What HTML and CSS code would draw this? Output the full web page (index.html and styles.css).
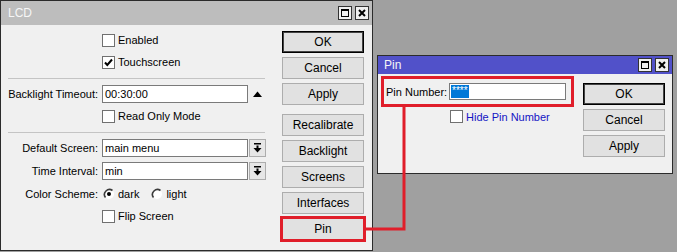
FILE: index.html
```html
<!DOCTYPE html>
<html>
<head>
<meta charset="utf-8">
<link rel="stylesheet" href="styles.css">
</head>
<body>
<div class="desktop">
  <div class="win lcd">
    <div class="titlebar">
      <span class="title">LCD</span>
      <span class="tbtns">
        <svg class="tbtn" width="14" height="14" viewBox="0 0 14 14"><rect x="0.5" y="0.5" width="13" height="13" fill="#f0f0f0" stroke="#333"/><rect x="3.5" y="3.5" width="7" height="7" fill="none" stroke="#000"/><rect x="3" y="3" width="8" height="2" fill="#000"/></svg>
        <svg class="tbtn" width="14" height="14" viewBox="0 0 14 14"><rect x="0.5" y="0.5" width="13" height="13" fill="#f0f0f0" stroke="#333"/><path d="M4 4L10 10M10 4L4 10" stroke="#000" stroke-width="2"/></svg>
      </span>
    </div>
    <div class="body">
      <div class="form">
        <div class="row indent">
          <span class="check"></span><span class="ctext">Enabled</span>
        </div>
        <div class="row indent">
          <span class="check"><svg width="11" height="11" viewBox="0 0 11 11"><path d="M2 5.5L4.3 8L9 2.5" fill="none" stroke="#000" stroke-width="2"/></svg></span><span class="ctext">Touchscreen</span>
        </div>
        <div class="sep"></div>
        <div class="row r-backlight">
          <span class="label">Backlight Timeout:</span>
          <span class="field">00:30:00</span>
          <svg class="uptri" width="9" height="6" viewBox="0 0 9 6"><path d="M0 6L4.5 0.5L9 6Z" fill="#000"/></svg>
        </div>
        <div class="row indent">
          <span class="check"></span><span class="ctext">Read Only Mode</span>
        </div>
        <div class="sep"></div>
        <div class="row r-default">
          <span class="label">Default Screen:</span>
          <span class="field">main menu</span>
          <span class="dd"><svg width="9" height="10" viewBox="0 0 9 10"><rect x="1" y="0" width="7" height="1.5" fill="#000"/><rect x="3.5" y="2.5" width="2" height="3" fill="#000"/><path d="M0.5 5L8.5 5L4.5 9.5Z" fill="#000"/></svg></span>
        </div>
        <div class="row r-tight">
          <span class="label">Time Interval:</span>
          <span class="field">min</span>
          <span class="dd"><svg width="9" height="10" viewBox="0 0 9 10"><rect x="1" y="0" width="7" height="1.5" fill="#000"/><rect x="3.5" y="2.5" width="2" height="3" fill="#000"/><path d="M0.5 5L8.5 5L4.5 9.5Z" fill="#000"/></svg></span>
        </div>
        <div class="row r-tight">
          <span class="label">Color Scheme:</span>
          <span class="radio"><svg width="12" height="12" viewBox="0 0 12 12"><circle cx="6" cy="6" r="5" fill="#fff"/><path d="M2.5 9.5A5 5 0 0 1 9.5 2.5" fill="none" stroke="#3a3a3a" stroke-width="1.6"/><circle cx="6" cy="6" r="2" fill="#000"/></svg></span><span class="ctext">dark</span>
          <span class="radio r2"><svg width="12" height="12" viewBox="0 0 12 12"><circle cx="6" cy="6" r="5" fill="#fff"/><path d="M2.5 9.5A5 5 0 0 1 9.5 2.5" fill="none" stroke="#3a3a3a" stroke-width="1.6"/></svg></span><span class="ctext">light</span>
        </div>
        <div class="row indent">
          <span class="check"></span><span class="ctext">Flip Screen</span>
        </div>
      </div>
      <div class="buttons">
        <div class="btn default">OK</div>
        <div class="btn">Cancel</div>
        <div class="btn">Apply</div>
        <div class="btn gapbefore">Recalibrate</div>
        <div class="btn">Backlight</div>
        <div class="btn">Screens</div>
        <div class="btn">Interfaces</div>
        <div class="btn marked">Pin</div>
      </div>
    </div>
  </div>

  <div class="win pin">
    <div class="titlebar">
      <span class="title">Pin</span>
      <span class="tbtns">
        <svg class="tbtn" width="14" height="14" viewBox="0 0 14 14"><rect x="0.5" y="0.5" width="13" height="13" fill="#f0f0f0" stroke="#333"/><rect x="3.5" y="3.5" width="7" height="7" fill="none" stroke="#000"/><rect x="3" y="3" width="8" height="2" fill="#000"/></svg>
        <svg class="tbtn" width="14" height="14" viewBox="0 0 14 14"><rect x="0.5" y="0.5" width="13" height="13" fill="#f0f0f0" stroke="#333"/><path d="M4 4L10 10M10 4L4 10" stroke="#000" stroke-width="2"/></svg>
      </span>
    </div>
    <div class="body">
      <div class="pinleft">
        <div class="redbox">
          <span class="plabel">Pin Number:</span>
          <span class="field pfield"><span class="sel">****</span></span>
        </div>
        <div class="hiderow">
          <span class="check"></span><span class="ctext blue">Hide Pin Number</span>
        </div>
      </div>
      <div class="buttons pbuttons">
        <div class="btn default">OK</div>
        <div class="btn">Cancel</div>
        <div class="btn">Apply</div>
      </div>
    </div>
  </div>

  <svg class="connector" width="677" height="252" viewBox="0 0 677 252"><polyline points="365,229 404,229 404,106" fill="none" stroke="#e01e2a" stroke-width="3"/></svg>
</div>
</body>
</html>
```

FILE: styles.css
```css
html, body {
  margin: 0;
  padding: 0;
}

.desktop {
  position: relative;
  width: 677px;
  height: 252px;
  background: #a0a0a0;
  overflow: hidden;
  font-family: "Liberation Sans", Arial, sans-serif;
  font-size: 11px;
  color: #000;
}

.win {
  position: absolute;
  box-sizing: border-box;
  background: #f0f0f0;
  border: 1px solid #2b2b2b;
  display: flex;
  flex-direction: column;
}

.lcd {
  left: 0;
  top: 0;
  width: 373px;
  height: 251px;
}

.pin {
  left: 377px;
  top: 55px;
  width: 296px;
  height: 119px;
}

.titlebar {
  display: flex;
  align-items: center;
  justify-content: space-between;
  padding: 0 3px 0 7px;
  color: #f6f6f6;
  font-size: 12px;
  flex: none;
}

.lcd .titlebar {
  height: 24px;
  background: #bdbdbd;
}

.pin .titlebar {
  height: 18px;
  background: #5151c9;
  padding-left: 6px;
}

.tbtns {
  display: flex;
  gap: 3px;
}

.tbtn {
  display: block;
}

.body {
  display: flex;
  flex: 1;
}

.form {
  width: 274px;
  padding: 4px 0 0 7px;
  display: flex;
  flex-direction: column;
}

.row {
  display: flex;
  align-items: center;
  height: 22px;
  flex: none;
}

.indent {
  padding-left: 94px;
}

.r-backlight {
  margin-top: 4px;
}

.r-default {
  margin-top: 4px;
}

.r-tight {
  margin-top: 1px;
}

.label {
  width: 90px;
  text-align: right;
  margin-right: 4px;
  flex: none;
  white-space: nowrap;
}

.sep {
  height: 1px;
  width: 257px;
  background: #c4c4c4;
  margin-top: 5px;
  flex: none;
}

.check {
  width: 13px;
  height: 13px;
  box-sizing: border-box;
  border: 1px solid #707070;
  background: #fff;
  display: flex;
  align-items: center;
  justify-content: center;
  flex: none;
}

.check svg {
  display: block;
}

.ctext {
  margin-left: 3px;
  white-space: nowrap;
}

.radio {
  width: 12px;
  height: 12px;
  margin-left: 1px;
  display: flex;
  flex: none;
}

.radio.r2 {
  margin-left: 12px;
}

.field {
  width: 146px;
  height: 18px;
  box-sizing: border-box;
  border: 1px solid #7a7a7a;
  background: #fff;
  padding: 0 2px;
  line-height: 16px;
  flex: none;
  white-space: nowrap;
}

.dd {
  width: 17px;
  height: 18px;
  box-sizing: border-box;
  margin-left: 1px;
  border: 1px solid #adadad;
  background: #e6e6e6;
  display: flex;
  align-items: center;
  justify-content: center;
  flex: none;
}

.dd svg {
  display: block;
}

.uptri {
  margin-left: 5px;
  display: block;
}

.buttons {
  display: flex;
  flex-direction: column;
  gap: 4px;
  padding: 6px 8px 0 0;
  width: 82px;
  flex: none;
}

.btn {
  height: 22px;
  box-sizing: border-box;
  border: 1px solid #adadad;
  background: #e1e1e1;
  display: flex;
  align-items: center;
  justify-content: center;
  font-size: 12px;
  flex: none;
}

.btn.default {
  border: 1px solid #000;
  box-shadow: inset 0 0 0 1px #444;
}

.btn.gapbefore {
  margin-top: 5px;
}

.btn.marked {
  outline: 3px solid #e01e2a;
  outline-offset: -1px;
}

.pinleft {
  width: 202px;
  padding: 2px 0 0 3px;
  flex: none;
}

.redbox {
  width: 193px;
  height: 31px;
  box-sizing: border-box;
  border: 3px solid #e01e2a;
  display: flex;
  align-items: center;
  padding-left: 2px;
}

.plabel {
  width: 63px;
  flex: none;
  white-space: nowrap;
}

.pfield {
  width: 117px;
  height: 17px;
  padding: 0 1px;
  line-height: 15px;
  display: flex;
  align-items: center;
}

.sel {
  background: #0078d7;
  color: #fff;
  height: 13px;
  line-height: 11px;
  padding: 0 1px;
  font-size: 10px;
}

.hiderow {
  display: flex;
  align-items: center;
  margin-top: 3px;
  padding-left: 69px;
}

.blue {
  color: #1414c4;
}

.pbuttons {
  padding: 9px 7px 0 0;
}

.connector {
  position: absolute;
  left: 0;
  top: 0;
  pointer-events: none;
}
```
